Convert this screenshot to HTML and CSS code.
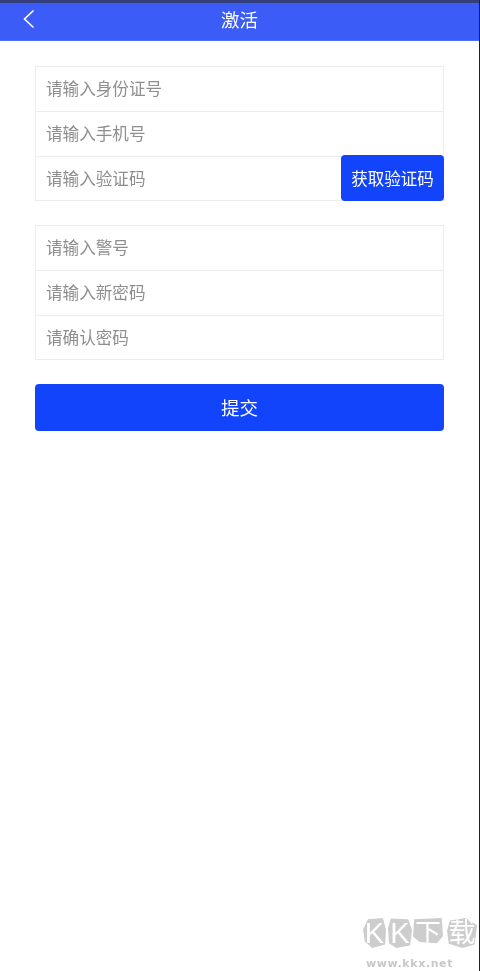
FILE: index.html
```html
<!DOCTYPE html>
<html lang="zh-CN">

<head>
    <meta charset="UTF-8">
    <title>激活</title>
    <link rel="stylesheet" href="styles.css">
</head>

<body>
    <div class="page">
        <div class="status-strip"></div>
        <div class="title-bar">
            <svg class="back-icon" width="14" height="20" viewBox="0 0 14 20">
                <path d="M11.5 1.5 L2.5 10 L11.5 18.5" fill="none" stroke="#fff" stroke-width="1.6" />
            </svg>
            <span class="title-text">激活</span>
        </div>

        <div class="form">
            <div class="form-group">
                <div class="form-row">请输入身份证号</div>
                <div class="form-row">请输入手机号</div>
                <div class="form-row">请输入验证码<div class="code-button">获取验证码</div>
                </div>
            </div>

            <div class="form-group">
                <div class="form-row">请输入警号</div>
                <div class="form-row">请输入新密码</div>
                <div class="form-row">请确认密码</div>
            </div>

            <div class="submit-button">提交</div>
        </div>

        <div class="watermark">
            <div class="watermark-logo">
                <span class="logo-stone stone1">K</span>
                <span class="logo-stone stone2">K</span>
                <span class="logo-stone stone3">下</span>
                <span class="logo-stone stone4">载</span>
            </div>
            <div class="watermark-url">www.kkx.net</div>
        </div>
    </div>
</body>

</html>
```

FILE: styles.css
```css
* {
    margin: 0;
    padding: 0;
    box-sizing: border-box;
}

body {
    width: 480px;
    height: 971px;
    background: #222;
    font-family: "Liberation Sans", "Noto Sans CJK SC", sans-serif;
    overflow: hidden;
}

.page {
    position: relative;
    width: 479px;
    height: 971px;
    background: #fff;
    filter: blur(0.35px);
}

.status-strip {
    height: 3px;
    background: #343f7c;
}

.title-bar {
    position: relative;
    height: 38px;
    padding-bottom: 6px;
    background: #3c5cf8;
    display: flex;
    align-items: center;
    justify-content: center;
    border-bottom: 1px solid #4f6ffa;
}

.back-icon {
    position: absolute;
    left: 22px;
    top: 6px;
}

.title-text {
    color: #fff;
    font-size: 18.5px;
}

.form {
    padding: 25px 35px 0;
}

.form-group {
    border: 1px solid #ececec;
    margin-bottom: 24px;
}

.form-row {
    position: relative;
    height: 45px;
    line-height: 46px;
    padding-left: 10px;
    font-size: 16.6px;
    color: #8e8e8e;
    border-bottom: 1px solid #ececec;
}

.form-row:last-child {
    height: 43px;
    border-bottom: none;
}

.code-button {
    position: absolute;
    right: -1px;
    top: -2px;
    width: 103px;
    height: 46px;
    background: #1244fb;
    border-radius: 4px;
    color: #fff;
    font-size: 16.5px;
    line-height: 49px;
    text-align: center;
}

.submit-button {
    height: 47px;
    background: #1244fb;
    border-radius: 4px;
    color: #fff;
    font-size: 18.5px;
    line-height: 49px;
    text-align: center;
}

.watermark {
    position: absolute;
    left: 363px;
    top: 918px;
    width: 116px;
}

.watermark-logo {
    display: flex;
    height: 30px;
}

.logo-stone {
    height: 30px;
    background: #cdcdcd;
    color: #fff;
    line-height: 30px;
    text-align: center;
}

.stone1,
.stone2 {
    font-size: 29px;
}

.stone1 {
    width: 23px;
    clip-path: polygon(22% 4%, 86% 0, 100% 38%, 96% 88%, 40% 100%, 8% 78%, 0 38%);
}

.stone2 {
    width: 24px;
    margin-left: 2px;
    clip-path: polygon(12% 2%, 84% 4%, 100% 40%, 92% 92%, 34% 100%, 4% 84%, 0 34%);
}

.stone3 {
    width: 30px;
    margin-left: 1px;
    font-size: 26px;
    clip-path: polygon(4% 4%, 96% 0, 100% 60%, 80% 84%, 22% 80%, 0 62%);
}

.stone4 {
    width: 30px;
    margin-left: 4px;
    font-size: 27px;
    clip-path: polygon(10% 8%, 62% 0, 100% 24%, 92% 88%, 52% 100%, 6% 86%, 0 42%);
}

.watermark-url {
    margin-top: 9px;
    padding-left: 3px;
    color: #c8c8c8;
    font-family: "DejaVu Sans", sans-serif;
    font-size: 11px;
    font-weight: bold;
    line-height: 13px;
    letter-spacing: 0.6px;
}
```
